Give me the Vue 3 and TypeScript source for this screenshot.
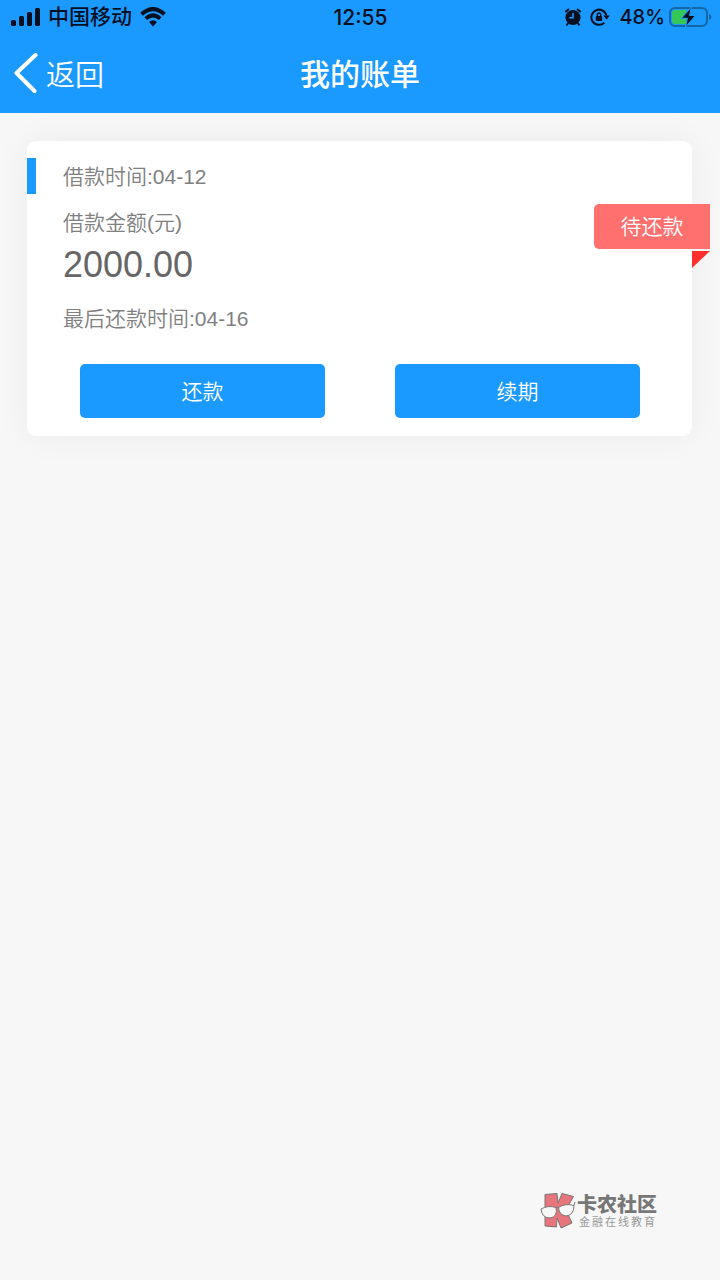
<script setup lang="ts">
interface Bill {
  borrowed: string
  amount: string
  due: string
  status: string
}

const bill: Bill = {
  borrowed: '04-12',
  amount: '2000.00',
  due: '04-16',
  status: '待还款',
}
</script>

<template>
  <div class="page">
    <header class="top">
      <div class="status">
        <div class="status-side">
          <svg class="signal" width="30" height="20" viewBox="0 0 30 20" aria-hidden="true">
            <rect x="0" y="13" width="5" height="6" rx="1.5" />
            <rect x="8" y="9" width="5" height="10" rx="1.5" />
            <rect x="16" y="5" width="5" height="14" rx="1.5" />
            <rect x="24" y="1" width="5" height="18" rx="1.5" />
          </svg>
          <span class="carrier">中国移动</span>
          <svg class="wifi" width="26" height="20" viewBox="0 0 26 20" aria-hidden="true">
            <path d="M1.5 7.3 Q13 -3.2 24.5 7.3" />
            <path d="M5.8 11.6 Q13 5 20.2 11.6" />
            <path class="dot" d="M9 15 Q13 11.5 17 15 L13 19.5 Z" />
          </svg>
        </div>
        <time class="clock">12:55</time>
        <div class="status-side right">
          <svg width="18" height="20" viewBox="0 0 18 20" aria-hidden="true">
            <circle cx="9" cy="10.5" r="7.6" />
            <path class="alarm-trim" d="M1.3 5 L5 2 M16.7 5 L13 2 M4.2 16 L2.5 18.3 M13.8 16 L15.5 18.3" />
            <path class="alarm-hand" d="M9 5.8 V10.8 H5.2" />
          </svg>
          <svg class="lock" width="20" height="20" viewBox="0 0 20 20" aria-hidden="true">
            <path class="ring" d="M14.4 15.6 A7.6 7.6 0 1 1 16.4 8.6" />
            <path d="M13.4 8.5 H19.8 L16.6 12.7 Z" />
            <rect x="5.8" y="9" width="6.4" height="5" rx="1" />
            <path class="shackle" d="M7.3 9.5 V7.8 Q7.3 6 9 6 Q10.7 6 10.7 7.8 V9.5" />
          </svg>
          <span class="percent">48%</span>
          <svg class="battery" width="43" height="22" viewBox="0 0 43 22" aria-hidden="true">
            <rect class="shell" x="1" y="2" width="37" height="18" rx="5" />
            <path class="shell-tip" d="M40 8 Q42.5 9 42.5 11 Q42.5 13 40 14 Z" />
            <path class="charge" d="M6 4 H18 L14 12 H18 L17 18 H6 Q3 18 3 15 V7 Q3 4 6 4 Z" />
            <path class="bolt" d="M22.5 1 L12.5 12.3 H18.5 L16.5 21 L26.5 9.5 H20.5 Z" />
          </svg>
        </div>
      </div>
      <nav class="nav">
        <a class="back" href="#">
          <svg width="24" height="40" viewBox="0 0 24 40" aria-hidden="true">
            <path d="M21.5 2 L2.5 20 L20.5 38" />
          </svg>
          <span>返回</span>
        </a>
        <h1 class="title">我的账单</h1>
      </nav>
    </header>

    <main class="content">
      <section class="card">
        <p class="row first">借款时间:{{ bill.borrowed }}</p>
        <p class="row">借款金额(元)</p>
        <p class="amount">{{ bill.amount }}</p>
        <p class="row due">最后还款时间:{{ bill.due }}</p>
        <div class="actions">
          <button type="button">还款</button>
          <button type="button">续期</button>
        </div>
        <span class="ribbon">{{ bill.status }}</span>
      </section>
    </main>

    <footer class="brand">
      <svg width="36" height="38" viewBox="0 0 36 38" aria-hidden="true">
        <path class="mark" d="M5 2.5 L17 1.5 L18 11 L22 1.5 L33.5 4.5 L26 18 L32 31 L21 36 L17 26 L16.5 35 L5 34 Z" />
        <path class="lens" d="M1 17 Q8 13 16 15.5 Q18 25 10 26 Q2 26 1 17 Z" />
        <path class="lens" d="M18.5 15.5 Q25 11 34 13.5 Q34 23 26 24 Q19 23 18.5 15.5 Z" />
        <path class="frame" d="M16 16 Q17 14 18.5 16 M34 13.5 L35 10" />
      </svg>
      <div class="brand-text">
        <strong>卡农社区</strong>
        <small>金融在线教育</small>
      </div>
    </footer>
  </div>
</template>

<style>
body {
  margin: 0;
  background: #f7f7f7;
}
</style>

<style scoped>
.page {
  display: flex;
  flex-direction: column;
  min-height: 100vh;
  background: #f7f7f7;
  font-family: "Liberation Sans", "Noto Sans CJK SC", sans-serif;
  font-weight: 350;
}

.top {
  background: #1a99ff;
  padding-bottom: 1px;
}

.status {
  display: grid;
  grid-template-columns: 1fr auto 1fr;
  align-items: center;
  height: 34px;
  padding: 0 10px 0 11px;
  color: #04101f;
  font-family: Inter, "Noto Sans CJK SC", sans-serif;
  font-size: 21px;
  font-weight: 500;
}

.status-side {
  display: flex;
  align-items: center;
}

.status-side svg {
  fill: #04101f;
  flex: none;
}

.right {
  justify-content: flex-end;
}

.carrier {
  margin: 0 8px 0 7px;
  line-height: 34px;
}

.status-side .wifi {
  fill: none;
  stroke: #04101f;
  stroke-width: 4;
}

.wifi .dot {
  fill: #04101f;
  stroke: none;
}

.alarm-trim,
.ring,
.shackle {
  fill: none;
  stroke: #04101f;
  stroke-width: 2;
}

.shackle {
  stroke-width: 1.5;
}

.alarm-hand {
  fill: none;
  stroke: #1a99ff;
  stroke-width: 1.5;
}

.status-side .lock {
  margin: 0 9px 0 8px;
}

.percent {
  font-size: 20px;
}

.battery {
  margin-left: 4px;
  margin-right: -2px;
}

.status-side .shell {
  fill: none;
  stroke: #1466aa;
  stroke-width: 2;
}

.shell-tip {
  fill: #1466aa;
}

.charge {
  fill: #34c759;
}

.bolt {
  stroke: #1a99ff;
  stroke-width: 1;
}

.nav {
  display: grid;
  grid-template-columns: 1fr auto 1fr;
  align-items: center;
  height: 78px;
  padding: 0 14px;
  color: #fff;
}

.back {
  display: flex;
  align-items: center;
  gap: 8px;
  color: inherit;
  font-size: 29px;
  text-decoration: none;
}

.back svg {
  fill: none;
  stroke: #fff;
  stroke-width: 4;
  stroke-linecap: round;
  stroke-linejoin: round;
}

.title {
  margin: 0;
  padding-bottom: 2px;
  font-size: 30px;
  font-weight: 500;
}

.content {
  flex: 1;
  padding: 28px 28px 0 27px;
}

.card {
  position: relative;
  padding: 17px 0 18px;
  border-radius: 9px;
  background: #fff;
  box-shadow: 0 0 36px rgba(0, 0, 0, 0.05);
}

.row,
.amount {
  margin: 0;
  padding-top: 2px;
  padding-left: 36px;
  color: #808080;
  font-size: 21px;
  line-height: 34px;
}

.first {
  margin-bottom: 10px;
  padding-left: 27px;
  border-left: 9px solid #1a99ff;
}

.amount {
  color: #666;
  font-size: 36px;
  font-weight: 400;
  line-height: 46px;
}

.due {
  margin-top: 12px;
}

.actions {
  display: grid;
  grid-template-columns: 1fr 1fr;
  gap: 70px;
  margin-top: 28px;
  padding: 0 52px 0 53px;
}

.actions button {
  height: 54px;
  padding: 0 0 2px;
  border: 0;
  border-radius: 5px;
  background: #1a99ff;
  color: #fff;
  font: inherit;
  font-size: 21px;
}

.ribbon {
  position: absolute;
  top: 63px;
  right: -18px;
  width: 116px;
  border-radius: 5px 0 0 5px;
  background: #ff706e;
  color: #fff;
  font-size: 21px;
  line-height: 45px;
  text-align: center;
}

.ribbon::after {
  content: "";
  position: absolute;
  top: 47px;
  right: 0;
  width: 18px;
  height: 17px;
  background: #ff302e;
  clip-path: polygon(0 0, 100% 0, 0 100%);
}

.brand {
  display: flex;
  align-items: center;
  align-self: flex-end;
  gap: 1px;
  margin: 0 63px 50px 0;
  color: #777;
}

.brand-text {
  display: flex;
  flex-direction: column;
}

.brand strong {
  font-size: 20px;
  font-weight: 900;
  line-height: 22px;
}

.brand small {
  padding-left: 2px;
  color: #999;
  font-size: 11px;
  font-weight: 400;
  letter-spacing: 2px;
  line-height: 12px;
}

.mark {
  fill: #e8747c;
  stroke: #777;
  stroke-width: 1;
}

.lens {
  fill: #f7f7f7;
  stroke: #777;
  stroke-width: 1;
}

.frame {
  fill: none;
  stroke: #777;
}
</style>
